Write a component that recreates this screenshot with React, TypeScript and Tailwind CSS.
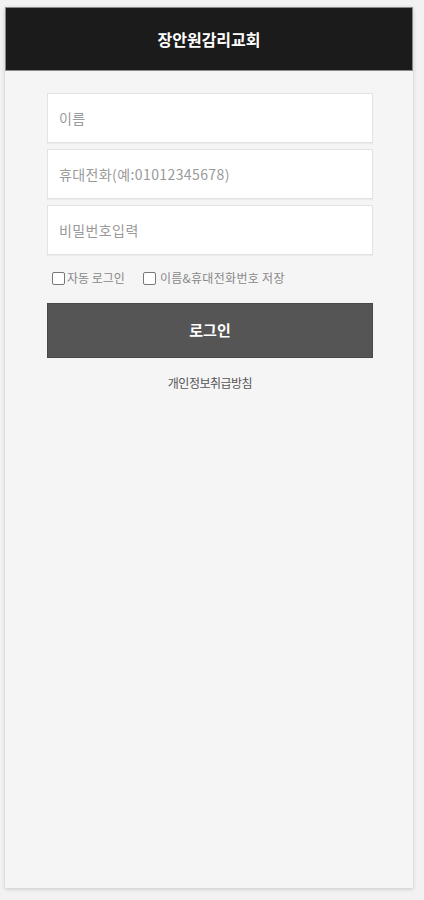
import React from "react";

export default function App() {
  const font = { fontFamily: '"Noto Sans CJK KR", "Liberation Sans", sans-serif' };
  return (
    <div className="min-h-[900px] w-[424px] bg-[#f2f2f2] pt-[7px] pl-[5px]" style={font}>
      <div className="w-[408px] h-[881px] bg-[#f5f5f5] shadow-[0_1px_4px_rgba(0,0,0,0.18)] flex flex-col">
        <div className="h-[64px] bg-[#1b1b1b] border border-[#8a8a8a] flex items-center justify-center">
          <span className="text-white text-[16px] font-bold">장안원감리교회</span>
        </div>
        <div className="flex flex-col pl-[42px] pr-[40px] pt-[22px]">
          <div className="flex flex-col gap-[6px]">
            <div className="h-[50px] bg-white border border-[#e3e3e3] shadow-[0_1px_1px_rgba(0,0,0,0.04)] flex items-center pl-[11px] text-[14px] text-[#9a9a9a] tracking-[0.4px]">이름</div>
            <div className="h-[50px] bg-white border border-[#e3e3e3] shadow-[0_1px_1px_rgba(0,0,0,0.04)] flex items-center pl-[11px] text-[14px] text-[#9a9a9a] tracking-[0.4px]">휴대전화(예:01012345678)</div>
            <div className="h-[50px] bg-white border border-[#e3e3e3] shadow-[0_1px_1px_rgba(0,0,0,0.04)] flex items-center pl-[11px] text-[14px] text-[#9a9a9a] tracking-[0.4px]">비밀번호입력</div>
          </div>
          <div className="flex items-center mt-[15px] pl-[5px] h-[16px] text-[12px] text-[#888]">
            <span className="w-[13px] h-[13px] border border-[#777] bg-white rounded-[2px] mr-[2px]" />
            <span>자동 로그인</span>
            <span className="w-[13px] h-[13px] border border-[#777] bg-white rounded-[2px] ml-[18px] mr-[4px]" />
            <span className="tracking-[0.3px]">이름&amp;휴대전화번호 저장</span>
          </div>
          <div className="mt-[17px] h-[55px] bg-[#555555] border border-[#474747] flex items-center justify-center">
            <span className="text-white text-[15px] font-bold">로그인</span>
          </div>
          <div className="mt-[16px] text-center text-[12px] text-[#555] tracking-[-0.5px]">개인정보취급방침</div>
        </div>
      </div>
    </div>
  );
}
